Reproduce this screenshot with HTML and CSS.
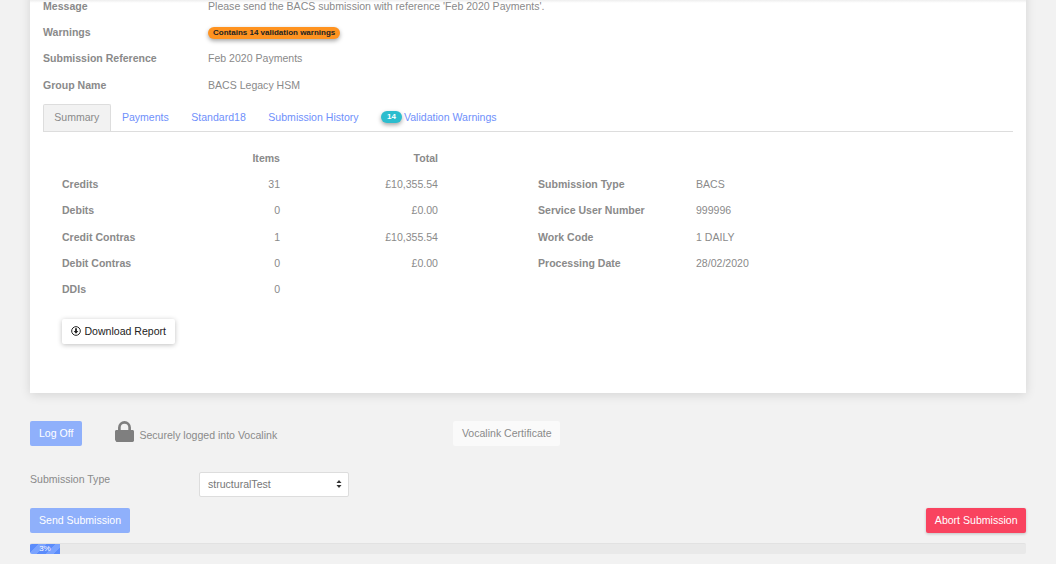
FILE: index.html
```html
<!DOCTYPE html>
<html lang="en">
<head>
<meta charset="utf-8">
<title>Submission</title>
<link rel="stylesheet" href="styles.css">
</head>
<body>
<main class="page">
  <section class="card">
    <dl class="details">
      <dt>Message</dt><dd>Please send the BACS submission with reference 'Feb 2020 Payments'.</dd>
      <dt>Warnings</dt><dd><span class="pill pill-warn">Contains 14 validation warnings</span></dd>
      <dt>Submission Reference</dt><dd>Feb 2020 Payments</dd>
      <dt>Group Name</dt><dd>BACS Legacy HSM</dd>
    </dl>
    <nav class="tabs">
      <a class="tab active">Summary</a>
      <a class="tab">Payments</a>
      <a class="tab">Standard18</a>
      <a class="tab">Submission History</a>
      <a class="tab tab-badge"><span class="pill pill-info">14</span>Validation Warnings</a>
    </nav>
    <div class="summary">
      <div class="totals">
        <span></span><b class="num">Items</b><b class="num">Total</b>
        <b>Credits</b><span class="num">31</span><span class="num">£10,355.54</span>
        <b>Debits</b><span class="num">0</span><span class="num">£0.00</span>
        <b>Credit Contras</b><span class="num">1</span><span class="num">£10,355.54</span>
        <b>Debit Contras</b><span class="num">0</span><span class="num">£0.00</span>
        <b>DDIs</b><span class="num">0</span><span></span>
      </div>
      <div class="meta">
        <b>Submission Type</b><span>BACS</span>
        <b>Service User Number</b><span>999996</span>
        <b>Work Code</b><span>1 DAILY</span>
        <b>Processing Date</b><span>28/02/2020</span>
      </div>
    </div>
    <button class="btn btn-white" type="button">
      <svg class="dl-icon" viewBox="0 0 12 12" aria-hidden="true"><circle cx="6" cy="6" r="5.2" fill="none" stroke="#222" stroke-width="1.2"/><path d="M4.900 2.800h2.200v3.200h1.700L6 9.200 3.200 6h1.700z" fill="#222"/></svg>
      Download Report
    </button>
  </section>

  <div class="login-row">
    <button class="btn btn-blue" type="button">Log Off</button>
    <svg class="lock" viewBox="0 0 20 22" aria-hidden="true"><path d="M1.500 9.500h1.700V6.800a6.800 6.800 0 0 1 13.600 0v2.700h1.700c.8 0 1.500.7 1.500 1.500v9.500c0 .8-.7 1.500-1.500 1.500h-17C.7 21 0 20.300 0 19.500V11c0-.8.7-1.500 1.500-1.500zM6 9.500h8V6.800a4 4 0 0 0-8 0z" fill="#7f7f7f"/></svg>
    <span class="secure">Securely logged into Vocalink</span>
    <button class="btn btn-pale" type="button">Vocalink Certificate</button>
  </div>

  <div class="type-row">
    <label class="type-label">Submission Type</label>
    <div class="select"><span>structuralTest</span>
      <svg class="updown" viewBox="0 0 8 11" aria-hidden="true"><path d="M4 0l3.500 4H.5zM4 11L.5 7h7z" fill="#333"/></svg>
    </div>
  </div>

  <div class="action-row">
    <button class="btn btn-blue" type="button">Send Submission</button>
    <button class="btn btn-red" type="button">Abort Submission</button>
  </div>

  <div class="progress"><div class="bar" style="width:3%">3%</div></div>
</main>
</body>
</html>
```
FILE: styles.css
```css
* { box-sizing: border-box; }
html, body { margin: 0; height: 100%; }
body {
  background: #f2f2f2;
  font-family: "Liberation Sans", Arial, sans-serif;
  font-size: 10.56px;
  color: #8a8a8a;
  overflow: hidden;
}
.page { padding: 0 30px; height: 564px; overflow: hidden; }
.card {
  background: linear-gradient(#eeeeee 12px, #ffffff 15px);
  height: 405px;
  margin-top: -12px;
  padding: 4.700px 13px 0;
  box-shadow: 0 2px 10px rgba(0,0,0,.12);
}
.details {
  margin: 0 0 6.300px;
  display: grid;
  grid-template-columns: 165px 1fr;
  grid-auto-rows: 26.3px;
  align-items: center;
}
.details dt { font-weight: 700; }
.details dd { margin: 0; }
.pill {
  display: inline-block;
  border-radius: 8px;
  font-weight: 700;
  box-shadow: 0 2px 4px rgba(0,0,0,.35);
}
.pill-warn { background: #ff9320; color: #222; font-size: 8px; line-height: 12px; padding: 0 5px; }
.pill-info { background: #2cbdce; color: #fff; font-size: 8px; line-height: 12px; padding: 0 6px; }
.tabs {
  display: flex;
  height: 28px;
  border-bottom: 1px solid #ddd;
}
.tab {
  padding: 7px 11.250px 0;
  color: #6f90fb;
  white-space: nowrap;
}
.tab-badge { display: flex; align-items: flex-start; gap: 2px; }
.tab.active {
  background: #f2f2f2;
  color: #8a8a8a;
  border: 1px solid #ddd;
  border-bottom: 0;
  border-radius: 2px 2px 0 0;
  padding: 6px 10.250px 0;
}
.summary { display: flex; padding: 12.700px 0 0 19px; }
.totals {
  display: grid;
  grid-template-columns: 120px 98px 158px;
  grid-auto-rows: 26.250px;
  align-items: center;
  width: 476px;
}
.meta {
  display: grid;
  grid-template-columns: 158px 1fr;
  grid-auto-rows: 26.250px;
  align-items: center;
  margin-top: 26.250px;
}
.num { text-align: right; }
.btn {
  border: 0;
  border-radius: 2px;
  font: inherit;
  height: 25px;
  padding: 0 9px 2px;
}
.btn-white {
  display: flex;
  align-items: center;
  gap: 3.500px;
  margin: 16.700px 0 0 19px;
  padding: 0 9px 1px;
  background: #fff;
  color: #222;
  box-shadow: 0 1px 5px rgba(0,0,0,.25);
}
.dl-icon { width: 10px; height: 10px; }
.btn-blue { background: #8fb0fb; color: #fff; }
.btn-pale { background: #fafafa; color: #8a8a8a; padding: 0 8.500px 2px; }
.btn-red { background: #f9435f; color: #fff; padding: 0 8.500px 2px; box-shadow: 0 1px 3px rgba(0,0,0,.2); }
.login-row { display: flex; align-items: flex-start; margin-top: 28px; }
.lock { width: 19px; height: 21px; margin-left: 33px; }
.secure { margin: 8px 0 0 5px; width: 314px; }
.type-row { display: flex; align-items: flex-start; margin-top: 26px; }
.type-label { width: 169px; margin-top: 1px; }
.select {
  display: flex;
  align-items: center;
  justify-content: space-between;
  width: 150px;
  height: 25px;
  background: #fff;
  border: 1px solid #ddd;
  border-radius: 2px;
  padding: 0 6px 1px 8px;
  color: #777;
}
.updown { width: 6px; height: 8px; }
.action-row { display: flex; justify-content: space-between; margin-top: 11px; }
.progress {
  height: 11px;
  margin-top: 10px;
  background: #e9e9e9;
  border-top: 1px solid #e2e2e2;
  border-radius: 2px;
  overflow: hidden;
}
.bar {
  height: 10px;
  background: repeating-linear-gradient(135deg, #5b8cfb 0 6px, #7aa3ff 6px 12px);
  color: #fff;
  font-size: 8px;
  line-height: 10px;
  text-align: center;
}
```
